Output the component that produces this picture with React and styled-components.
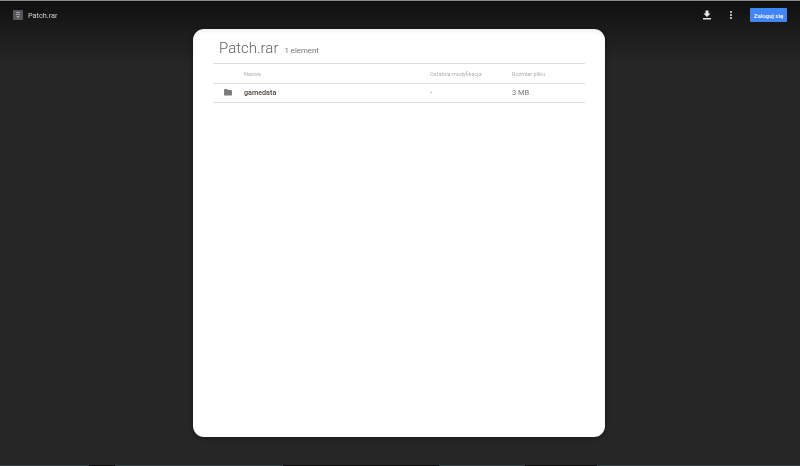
import React from "react";
import styled, { createGlobalStyle } from "styled-components";

const Global = createGlobalStyle`
  html, body { margin: 0; padding: 0; width: 800px; height: 466px; overflow: hidden; background: #262626; }
  #root { width: 800px; height: 466px; }
`;
const Page = styled.div`
  width: 800px; height: 466px; position: relative; overflow: hidden;
  background: #262626; font-family: "Roboto", "Liberation Sans", sans-serif;
  display: flex; flex-direction: column; border-top: 1px solid #8a8a8a; box-sizing: border-box;
`;
const TopBar = styled.header`
  position: absolute; top: 0; left: 0; right: 0; height: 64px;
  background: linear-gradient(#0f0f0f 0%, #1a1a1a 40%, #262626 100%);
`;
const TopContent = styled.div`
  position: relative; height: 28px; display: flex; align-items: center; padding: 0 13px;
`;
const FileIcon = styled.svg`
  display: block; width: 10px; height: 10px; margin-right: 5px; opacity: .85;
`;
const FileName = styled.span`
  color: #d4d4d4; font-size: 7.3px; flex: 1; filter: blur(.2px);
`;
const ActionIcon = styled.svg`
  display: block; width: 12px; height: 12px; margin-right: ${p => p.$gap}px; fill: #e8e8e8;
`;
const Login = styled.button`
  background: #4285f4; color: #fff; border: 0; border-radius: 1px; width: 37px; height: 14px;
  padding: 0; font: 500 6px "Roboto", sans-serif;
`;
const Body = styled.main`
  position: relative; flex: 1; display: flex; justify-content: center;
  padding: 28px 2px 29px 0;
`;
const Card = styled.section`
  width: 412px; background: #fff; border-radius: 11px;
  box-shadow: 0 1px 5px rgba(0,0,0,.4), inset 0 4px 5px -2px rgba(0,0,0,.07);
  padding: 0 20px; box-sizing: border-box; filter: blur(.2px);
`;
const Heading = styled.div`
  height: 34px; display: flex; align-items: baseline; padding: 10px 0 0 6px; box-sizing: border-box; gap: 6px;
`;
const Title = styled.h1`
  margin: 0; font-weight: 300; font-size: 15px; color: #5f5f5f; line-height: 19px;
`;
const Count = styled.span`
  font-size: 7.8px; color: #757575;
`;
const Row = styled.div`
  display: grid; grid-template-columns: 31px 186px 82px 1fr; align-items: center;
  border-top: 1px solid #dedede; height: 20px; box-sizing: border-box;
  &:last-child { border-bottom: 1px solid #dedede; padding-bottom: 2px; }
`;
const HeadCell = styled.span`
  font-size: 5.5px; color: #b0b0b0;
`;
const NameCell = styled.span`
  font-size: 7.2px; color: #4a3f33; font-weight: 500;
`;
const MetaCell = styled.span`
  font-size: 7.5px; color: #777;
`;
const FolderSlot = styled.span`
  display: flex; padding-left: 11px;
`;
const Stripe = styled.div`
  position: absolute; left: 0; right: 0; bottom: 0; height: 1px; display: flex; background: #333d3d;
`;
const Blot = styled.span`
  height: 1px; background: #0c0c0c; width: ${p => p.$w}px; margin-left: ${p => p.$m}px;
`;

export default function App() {
  return (
    <Page>
      <Global />
      <TopBar>
        <TopContent>
          <FileIcon viewBox="0 0 10 10">
            <rect width="10" height="10" rx="1" fill="#5f6368" />
            <path d="M3 2h4v1H3zM3 4h4v1H3zM3.5 6h3v1h-3zM4.3 7.6h1.4v1H4.3z" fill="#bfc0c2" />
          </FileIcon>
          <FileName>Patch.rar</FileName>
          <ActionIcon $gap={12} viewBox="0 0 24 24">
            <path d="M19 9h-4V3H9v6H5l7 7 7-7zM4 18v3h16v-3H4z" />
          </ActionIcon>
          <ActionIcon $gap={13} viewBox="0 0 24 24">
            <path d="M12 8a2 2 0 1 0 0-4 2 2 0 0 0 0 4zm0 2a2 2 0 1 0 0 4 2 2 0 0 0 0-4zm0 6a2 2 0 1 0 0 4 2 2 0 0 0 0-4z" />
          </ActionIcon>
          <Login>Zaloguj się</Login>
        </TopContent>
      </TopBar>
      <Body>
        <Card>
          <Heading>
            <Title>Patch.rar</Title>
            <Count>1 element</Count>
          </Heading>
          <Row>
            <span />
            <HeadCell>Nazwa</HeadCell>
            <HeadCell>Ostatnia modyfikacja</HeadCell>
            <HeadCell>Rozmiar pliku</HeadCell>
          </Row>
          <Row>
            <FolderSlot>
              <svg width="8" height="7" viewBox="0 0 9 8">
                <path d="M0 1a1 1 0 0 1 1-1h2.4l1 1H8a1 1 0 0 1 1 1v4.5a1 1 0 0 1-1 1H1a1 1 0 0 1-1-1z" fill="#7a7a7a" />
              </svg>
            </FolderSlot>
            <NameCell>gamedata</NameCell>
            <MetaCell>-</MetaCell>
            <MetaCell>3 MB</MetaCell>
          </Row>
        </Card>
      </Body>
      <Stripe>
        <Blot $m={89} $w={26} />
        <Blot $m={168} $w={156} />
        <Blot $m={86} $w={72} />
      </Stripe>
    </Page>
  );
}
